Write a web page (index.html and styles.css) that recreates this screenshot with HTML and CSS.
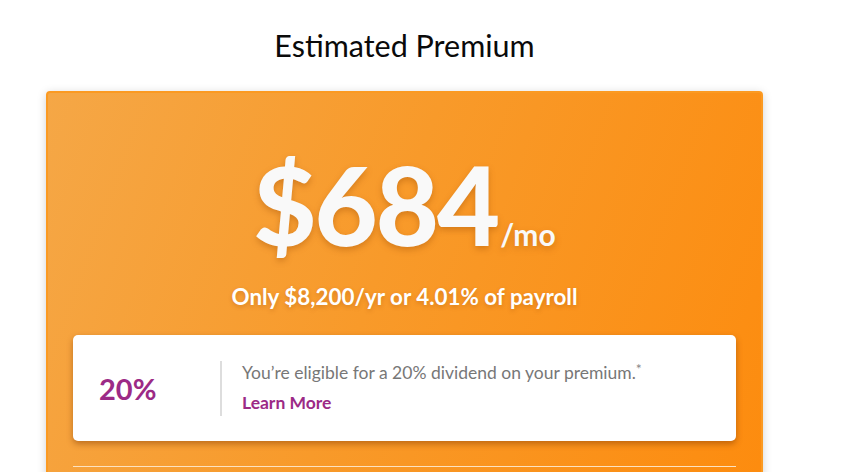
FILE: index.html
```html
<!DOCTYPE html>
<html>
<head>
<meta charset="utf-8">
<link rel="stylesheet" href="styles.css">
</head>
<body>
<div class="wrap">
  <h1 class="title">Estimated Premium</h1>
  <div class="card">
    <div class="price">
      <span class="amount">$684</span><span class="per">/mo</span>
    </div>
    <p class="sub">Only $8,200/yr or 4.01% of payroll</p>
    <div class="dividend">
      <div class="pct">20%</div>
      <div class="divider"></div>
      <div class="info">
        <p class="info-text">You’re eligible for a 20% dividend on your premium.<sup>*</sup></p>
        <a class="learn" href="#">Learn More</a>
      </div>
    </div>
    <hr class="rule">
  </div>
</div>
</body>
</html>
```
FILE: styles.css
```css
html, body {
  margin: 0;
  padding: 0;
  background: #fff;
  font-family: Lato, "Open Sans", sans-serif;
  overflow: hidden;
}
.wrap {
  width: 717px;
  margin-left: 46px;
  padding-top: 25px;
}
.title {
  margin: 0 0 26px;
  text-align: center;
  font-weight: 400;
  font-size: 30.5px;
  line-height: 40px;
  color: #0a0a0a;
}
.card {
  border: 2px solid #fb9a22;
  border-radius: 4px;
  background: linear-gradient(110deg, #f5a746 0%, #f89a2a 45%, #fd8b0d 100%);
  box-shadow: 0 2px 10px rgba(0,0,0,0.18);
  padding: 56px 25px 0;
  height: 400px;
}
.price {
  text-align: center;
  color: #f9f9f9;
  text-shadow: 0 3px 6px rgba(150,70,0,0.35);
  font-size: 109px;
  line-height: 1;
}
.amount {
  font-weight: 900;
  font-size: 109px;
  letter-spacing: -2px;
}
.per {
  font-weight: 700;
  font-size: 30px;
  margin-left: 2px;
}
.sub {
  margin: 27px 0 0;
  text-align: center;
  color: #fff;
  font-weight: 700;
  font-size: 22.4px;
  line-height: 24px;
  text-shadow: 0 2px 4px rgba(150,70,0,0.3);
}
.dividend {
  margin-top: 26px;
  background: #fff;
  border-radius: 5px;
  box-shadow: 0 3px 6px rgba(120,50,0,0.45);
  height: 106px;
  display: flex;
  align-items: center;
}
.pct {
  width: 147px;
  padding-left: 26px;
  box-sizing: border-box;
  color: #9c2a86;
  font-weight: 700;
  font-size: 29px;
}
.divider {
  width: 2px;
  height: 55px;
  background: #ddd;
}
.info {
  padding-left: 20px;
}
.info-text {
  margin: 0;
  color: #777;
  font-size: 17.5px;
  line-height: 30px;
}
.info-text sup {
  font-size: 14px;
  vertical-align: 5px;
  line-height: 0;
  color: #888;
}
.learn {
  display: block;
  color: #9c2a86;
  font-weight: 700;
  font-size: 17.5px;
  line-height: 30px;
  text-decoration: none;
}
.rule {
  margin: 25px 0 0;
  border: 0;
  border-top: 1px solid #fde2c0;
}
```
